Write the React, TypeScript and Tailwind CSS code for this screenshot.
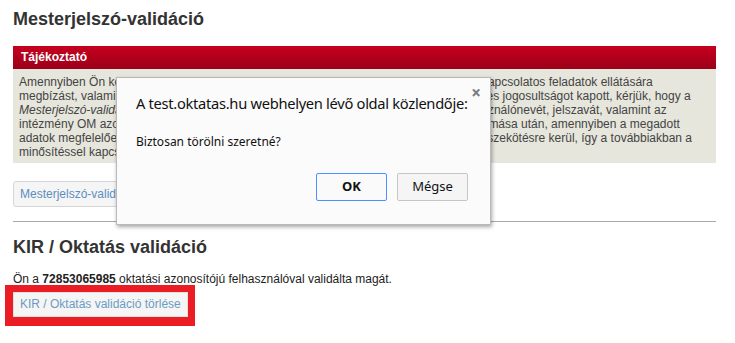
import * as React from 'react';

const lines: React.ReactNode[] = [
  'Amennyiben Ön köznevelési intézményben tanfelügyelettel és pedagógusminősítéssel kapcsolatos feladatok ellátására',
  'megbízást, valamint a Köznevelési Információs Rendszerben (KIR) is az ehhez szükséges jogosultságot kapott, kérjük, hogy a',
  <>
    <i>Mesterjelszó-validáció</i> gombra kattintva adja meg a KIR rendszerben használatos felhasználónevét, jelszavát, valamint az
  </>,
  'intézmény OM azonosítóját. Az adatok pontos beírása és a lenti Validáció gomb megnyomása után, amennyiben a megadott',
  'adatok megfelelőek, az Ön KIR és az Oktatási Hivatal rendszerbeli felhasználói fiókja összekötésre kerül, így a továbbiakban a',
  'minősítéssel kapcsolatos feladatok elvégezhetők.',
];

function ConfirmDialog() {
  return (
    <div className="absolute left-[116px] top-[77px] h-[148px] w-[375px] border border-[#b9b9b9] bg-[#fbfbfb] shadow-[1px_2px_4px_rgba(0,0,0,0.35)] font-['Noto_Sans',sans-serif] text-[#111]">
      <button className="absolute right-[9px] top-[6px] text-[17px] font-bold leading-none text-[#7a7a7a]">
        ×
      </button>
      <div className="pl-[19px] pr-[8px] pt-[15px]">
        <p className="whitespace-nowrap text-[14.7px] leading-[20px] tracking-[-0.3px]">
          A test.oktatas.hu webhelyen lévő oldal közlendője:
        </p>
        <p className="mt-[21px] text-[12px] leading-[16px]">Biztosan törölni szeretné?</p>
        <div className="mt-[23px] flex justify-end gap-[10px] pr-[14px]">
          <button className="h-[28px] w-[71px] rounded-[2px] border border-[#4d90fe] bg-[#fafafa] text-[13px] font-bold">
            OK
          </button>
          <button className="h-[28px] w-[71px] rounded-[2px] border border-[#c6c6c6] bg-[#f5f5f5] text-[13px]">
            Mégse
          </button>
        </div>
      </div>
    </div>
  );
}

export default function App() {
  return (
    <div className="relative h-[343px] w-[735px] overflow-hidden bg-white font-['Liberation_Sans',Arial,sans-serif] text-[#333]">
      <div className="w-[716px] pl-[13px] pt-[7px]">
        <h1 className="text-[18px] font-bold leading-[24px]">Mesterjelszó-validáció</h1>

        <div className="mt-[15px]">
          <div className="h-[23px] bg-gradient-to-b from-[#c6001f] to-[#9c0019] pl-[8px] text-[12px] font-bold leading-[23px] text-white">
            Tájékoztató
          </div>
          <div className="h-[94px] overflow-hidden bg-[#e6e6dc] px-[6px] pt-[6px] text-[12px] leading-[14px] text-[#444]">
            {lines.map((l, i) => (
              <div key={i} className="whitespace-nowrap">
                {l}
              </div>
            ))}
          </div>
        </div>

        <button className="mt-[18px] h-[26px] rounded-[3px] border border-[#d6d6d6] bg-[#f5f5f5] px-[6px] text-[12px] text-[#5b8fbe]">
          Mesterjelszó-validáció
        </button>

        <hr className="mt-[14px] border-t border-[#a9a9a9]" />

        <h2 className="mt-[13px] text-[18px] font-bold leading-[24px]">KIR / Oktatás validáció</h2>

        <p className="mt-[13px] text-[12px] leading-[14px] text-[#222]">
          Ön a <b>72853065985</b> oktatási azonosítójú felhasználóval validálta magát.
        </p>

        <div className="-ml-[8px] mt-[-1px] inline-block bg-[#ec1c24] pb-[9px] pl-[8px] pr-[7px] pt-[6px]">
          <button className="h-[25px] border border-[#e2e2e2] bg-[#f5f5f5] px-[6px] text-[12px] text-[#6b9cc4]">
            KIR / Oktatás validáció törlése
          </button>
        </div>
      </div>

      <ConfirmDialog />
    </div>
  );
}
